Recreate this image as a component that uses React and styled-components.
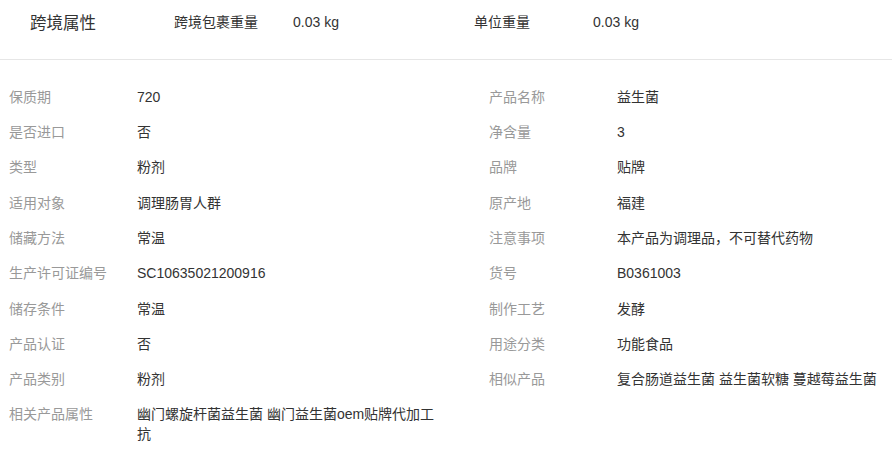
import React from 'react';
import styled, { createGlobalStyle } from 'styled-components';

const GlobalStyle = createGlobalStyle`
  body {
    margin: 0;
    background: #fff;
    font-family: "Liberation Sans", Arial, "Noto Sans CJK SC", sans-serif;
  }
`

const crossBorder = [
  { name: '跨境包裹重量', value: '0.03 kg' },
  { name: '单位重量', value: '0.03 kg' },
];

const attrs = [
  ['保质期', '720'],
  ['产品名称', '益生菌'],
  ['是否进口', '否'],
  ['净含量', '3'],
  ['类型', '粉剂'],
  ['品牌', '贴牌'],
  ['适用对象', '调理肠胃人群'],
  ['原产地', '福建'],
  ['储藏方法', '常温'],
  ['注意事项', '本产品为调理品，不可替代药物'],
  ['生产许可证编号', 'SC10635021200916'],
  ['货号', 'B0361003'],
  ['储存条件', '常温'],
  ['制作工艺', '发酵'],
  ['产品认证', '否'],
  ['用途分类', '功能食品'],
  ['产品类别', '粉剂'],
  ['相似产品', '复合肠道益生菌 益生菌软糖 蔓越莓益生菌'],
  ['相关产品属性', '幽门螺旋杆菌益生菌 幽门益生菌oem贴牌代加工抗'],
];

const App = () => {
  return (
    <Wrapper>
      <GlobalStyle />
      <Header>
        <Title>跨境属性</Title>
        {crossBorder.map(item => (
          <HeaderItem key={item.name}>
            <HeaderLabel>{item.name}</HeaderLabel>
            <HeaderValue>{item.value}</HeaderValue>
          </HeaderItem>
        ))}
      </Header>
      <AttrGrid>
        {attrs.map(([name, value]) => (
          <AttrItem key={name}>
            <AttrLabel>{name}</AttrLabel>
            <AttrValue>{value}</AttrValue>
          </AttrItem>
        ))}
      </AttrGrid>
    </Wrapper>
  );
};

const Wrapper = styled.div`
  width: 892px;
  overflow: hidden;
`
const Header = styled.div`
  display: flex;
  align-items: center;
  box-sizing: border-box;
  height: 60px;
  padding: 0 0 15px 30px;
  border-bottom: 1px solid #e6e6e6;
`
const Title = styled.div`
  width: 144px;
  margin-top: 2px;
  font-size: 16.5px;
  line-height: 20px;
  color: #333;
`
const HeaderItem = styled.div`
  display: flex;
  width: 300px;
  font-size: 14px;
  line-height: 20px;
  color: #333;
`
const HeaderLabel = styled.span`
  width: 119px;
`
const HeaderValue = styled.span`
`
const AttrGrid = styled.div`
  display: grid;
  grid-template-columns: 480px 1fr;
  padding: 19px 0 0 9px;
`
const AttrItem = styled.div`
  display: flex;
  padding: 7.67px 0;
  font-size: 14px;
  line-height: 20px;
`
const AttrLabel = styled.div`
  width: 128px;
  flex-shrink: 0;
  color: #999;
`
const AttrValue = styled.div`
  max-width: 305px;
  color: #333;
  word-break: break-all;
`

export default App;
